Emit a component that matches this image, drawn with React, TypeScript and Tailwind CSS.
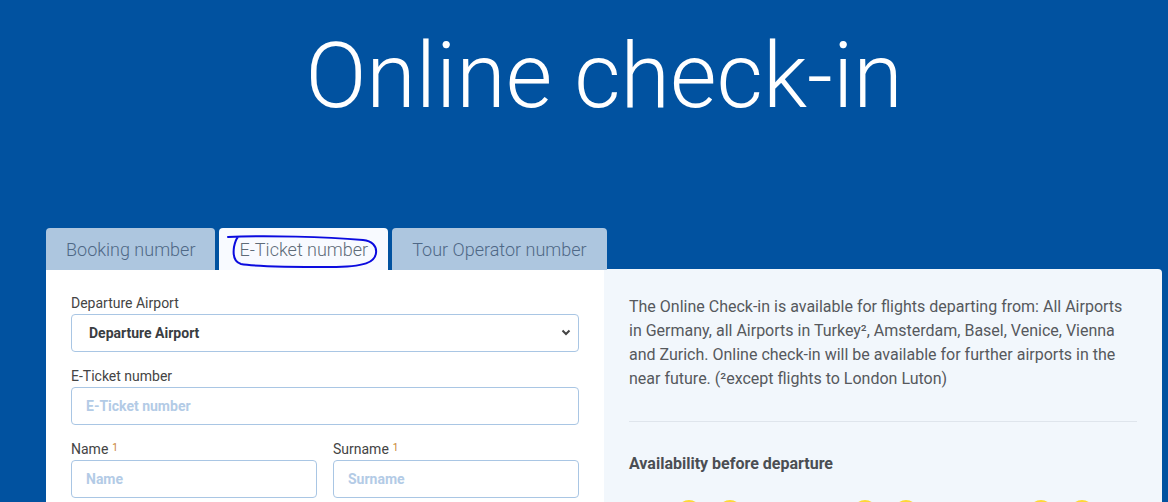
import React, { useState } from 'react';

const TABS = ['Booking number', 'E-Ticket number', 'Tour Operator number'];

const Label: React.FC<{ text: string; note?: boolean }> = ({ text, note }) => (
  <label className="block text-[14px] leading-5 text-[#444] mb-[1px]">
    {text}
    {note && <sup className="ml-[4px] text-[10px] text-[#c9822f] relative -top-[3px]">1</sup>}
  </label>
);

const TextInput: React.FC<{ placeholder: string }> = ({ placeholder }) => (
  <input
    placeholder={placeholder}
    className="w-full h-[38px] rounded-[4px] border border-[#a9c6e4] bg-white px-[14px] text-[14px] font-bold text-[#333] placeholder:text-[#b3cbe6] outline-none"
  />
);

const App: React.FC = () => {
  const [active, setActive] = useState(1);

  return (
    <div className="h-[502px] overflow-hidden bg-[#0152a0] font-['Roboto',sans-serif]">
      <div className="ml-[46px] w-[1116px]">
        <h1 className="pt-[32px] text-center text-[90px] leading-none font-light text-white">Online check-in</h1>

        {/* tab strip */}
        <div className="relative flex gap-1 mt-[106px]">
          {TABS.map((tab, i) => (
            <button
              key={tab}
              onClick={() => setActive(i)}
              className={`h-[42px] px-5 rounded-t-[4px] text-[18px] font-light ${
                active === i ? 'bg-[#f8faff] text-[#5e6b78]' : 'bg-[#adc6df] text-[#4f6886]'
              }`}
            >
              {tab}
            </button>
          ))}
          {/* pen mark around the selected tab */}
          <svg className="absolute left-[180px] top-[4px] pointer-events-none" width="158" height="40" viewBox="0 0 158 40" fill="none">
            <path
              d="M2 5 C 40 3, 100 5, 137 8 C 146 9, 151 14, 150 21 C 149 30, 140 35, 104 35 C 70 35, 30 35, 15 32 C 8 30, 7 22, 8 15 C 9 10, 10 7, 12 5"
              stroke="#0a0adf"
              strokeWidth="2"
              strokeLinecap="round"
            />
          </svg>
        </div>

        <div className="grid grid-cols-2">
          {/* form */}
          <div className="bg-white px-[25px] pt-[23px] pb-10">
            <Label text="Departure Airport" />
            <div className="relative">
              <select className="w-full h-[38px] appearance-none rounded-[4px] border border-[#a9c6e4] bg-white pl-[17px] text-[14px] font-bold text-[#3a3d42] outline-none">
                <option>Departure Airport</option>
              </select>
              <svg className="absolute right-[8px] top-[15px] pointer-events-none" width="10" height="7" viewBox="0 0 10 7" fill="none">
                <path d="M1.5 1.5 L5 5 L8.5 1.5" stroke="#444" strokeWidth="2" />
              </svg>
            </div>

            <div className="mt-[14px]">
              <Label text="E-Ticket number" />
              <TextInput placeholder="E-Ticket number" />
            </div>

            <div className="mt-[14px] grid grid-cols-2 gap-4">
              <div>
                <Label text="Name" note />
                <TextInput placeholder="Name" />
              </div>
              <div>
                <Label text="Surname" note />
                <TextInput placeholder="Surname" />
              </div>
            </div>
          </div>

          {/* info */}
          <div className="bg-[#f2f7fc] rounded-tr-[4px] -mt-px pt-[26px] px-[25px] pb-10">
            <p className="text-[16px] leading-6 text-[#56595d]">
              The Online Check-in is available for flights departing from: All Airports in Germany, all Airports in
              Turkey², Amsterdam, Basel, Venice, Vienna and Zurich. Online check-in will be available for further
              airports in the near future. (²except flights to London Luton)
            </p>
            <hr className="mt-[30px] border-t border-[#dfe5ec]" />
            <h3 className="mt-[30px] text-[16px] leading-6 font-bold text-[#4b4e53]">Availability before departure</h3>
            <div className="mt-[24px] flex gap-[111px] pl-[48px]">
              {[0, 1, 2].map((c) => (
                <div key={c} className="flex gap-[17px]">
                  <span className="w-6 h-6 rounded-full bg-[#fdd835]" />
                  <span className="w-6 h-6 rounded-full bg-[#fdd835]" />
                </div>
              ))}
            </div>
          </div>
        </div>
      </div>
    </div>
  );
};

export default App;
